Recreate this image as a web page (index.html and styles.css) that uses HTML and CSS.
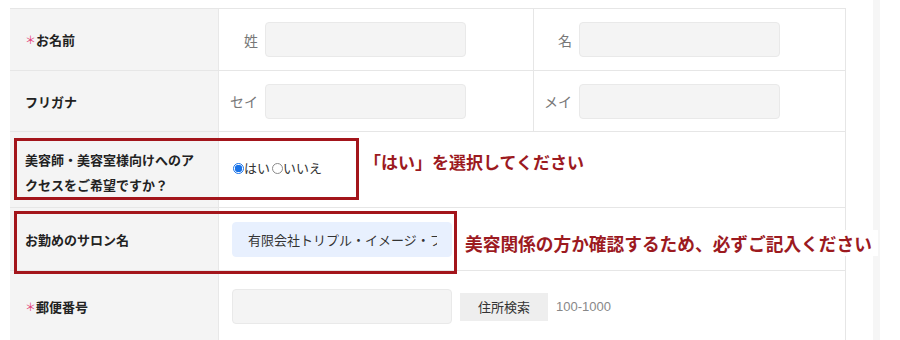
FILE: index.html
```html
<!DOCTYPE html>
<html lang="ja">
<head>
<meta charset="utf-8">
<link rel="stylesheet" href="styles.css">
</head>
<body>
<div class="page">
  <div class="strip"></div>
  <div class="form">
    <div class="row r1">
      <div class="label"><span class="req">＊</span>お名前</div>
      <div class="value split">
        <div class="sub first"><span class="sublabel">姓</span><span class="field"></span></div>
        <div class="sub second"><span class="sublabel">名</span><span class="field"></span></div>
      </div>
    </div>
    <div class="row r2">
      <div class="label">フリガナ</div>
      <div class="value split">
        <div class="sub first"><span class="sublabel">セイ</span><span class="field"></span></div>
        <div class="sub second"><span class="sublabel">メイ</span><span class="field"></span></div>
      </div>
    </div>
    <div class="row r3">
      <div class="label">美容師・美容室様向けへのアクセスをご希望ですか？</div>
      <div class="value pad">
        <span class="radio on"></span><span class="rtext">はい</span><span class="radio"></span><span class="rtext">いいえ</span>
      </div>
    </div>
    <div class="row r4">
      <div class="label">お勤めのサロン名</div>
      <div class="value pad">
        <div class="field wide auto"><span class="clip">有限会社トリプル・イメージ・フォー</span></div>
      </div>
    </div>
    <div class="row r5">
      <div class="label"><span class="req">＊</span>郵便番号</div>
      <div class="value pad">
        <span class="field wide"></span>
        <span class="btn">住所検索</span>
        <span class="hint">100-1000</span>
      </div>
    </div>
  </div>
  <div class="redbox box1"></div>
  <div class="redbox box2"></div>
  <div class="note note1">「はい」を選択してください</div>
  <div class="note note2">美容関係の方か確認するため、必ずご記入ください</div>
</div>
</body>
</html>
```
FILE: styles.css
```css
* { box-sizing: border-box; }
html, body { margin: 0; padding: 0; background: #fff; }
body {
  font-family: "Noto Sans CJK JP", "Noto Sans", sans-serif;
  color: #222;
  width: 900px;
  height: 340px;
  overflow: hidden;
}
.page {
  position: relative;
  padding: 8px 0 0 10px;
  height: 340px;
}
.strip {
  position: absolute;
  left: 873px;
  top: 0;
  width: 7px;
  height: 340px;
  background: #f6f6f6;
}
.form {
  width: 836px;
  border-top: 1px solid #e6e6e6;
  border-right: 1px solid #e6e6e6;
}
.row {
  display: grid;
  grid-template-columns: 209px 1fr;
  border-bottom: 1px solid #e6e6e6;
}
.r1 { height: 62px; }
.r2 { height: 61px; }
.r3 { height: 76px; }
.r4 { height: 63px; }
.r5 { height: 72px; }
.label {
  background: #f4f4f4;
  border-right: 1px solid #e8e8e8;
  display: flex;
  align-items: center;
  padding: 0 12px 0 15px;
  font-size: 13px;
  font-weight: 700;
  line-height: 25px;
  color: #222;
}
.r3 .label { display: block; padding-top: 15px; }
.req {
  color: #e4407a;
  font-size: 11px;
  font-weight: 400;
  margin-right: 0;
}
.value { display: flex; align-items: center; }
.value.pad { padding-left: 13px; }
.split { display: grid; grid-template-columns: 314px 1fr; }
.sub { display: flex; align-items: center; height: 100%; }
.sub.first { padding-left: 8px; }
.sub.second { border-left: 1px solid #e6e6e6; padding-left: 7px; }
.sublabel {
  flex: 0 0 31px;
  width: 31px;
  white-space: nowrap;
  text-align: right;
  margin-right: 7px;
  font-size: 14px;
  color: #777;
}
.field {
  display: block;
  flex: 0 0 auto;
  width: 201px;
  height: 35px;
  background: #f4f4f4;
  border: 1px solid #e9e9e9;
  border-radius: 4px;
}
.field.wide { width: 220px; }
.field.auto {
  background: #e8f0fe;
  border-color: #e8f0fe;
  font-size: 13px;
  color: #333;
  line-height: 33px;
  padding: 0 14px 0 15px;
}
.clip {
  display: block;
  white-space: nowrap;
  overflow: hidden;
}
.radio {
  width: 11px;
  height: 11px;
  border-radius: 50%;
  border: 1px solid #8a8a8a;
  background: #fff;
  margin-top: 1px;
}
.radio.on {
  border: 1px solid #1a73e8;
  background: radial-gradient(circle, #1a73e8 0 3.5px, #fff 4px);
}
.rtext {
  font-size: 13px;
  color: #333;
  margin-right: 2px;
}
.r3 .value { padding-bottom: 4px; padding-left: 14px; }
.btn {
  margin-left: 8px;
  width: 88px;
  height: 28px;
  background: #eeeeee;
  font-size: 13px;
  color: #333;
  display: flex;
  align-items: center;
  justify-content: center;
}
.hint {
  margin-left: 8px;
  font-family: "Liberation Sans", "Noto Sans", sans-serif;
  font-size: 13px;
  color: #888;
}
.redbox {
  position: absolute;
  border: 3px solid #a3151b;
}
.box1 { left: 14px; top: 138px; width: 345px; height: 62px; }
.box2 { left: 14px; top: 211px; width: 443px; height: 63px; }
.note {
  position: absolute;
  font-weight: 700;
  color: #9c1a1f;
  background: #fff;
  line-height: 26px;
  white-space: nowrap;
}
.note1 { left: 364px; top: 149px; font-size: 17px; }
.note2 { left: 465px; top: 230px; font-size: 17.7px; padding-right: 6px; }
```
